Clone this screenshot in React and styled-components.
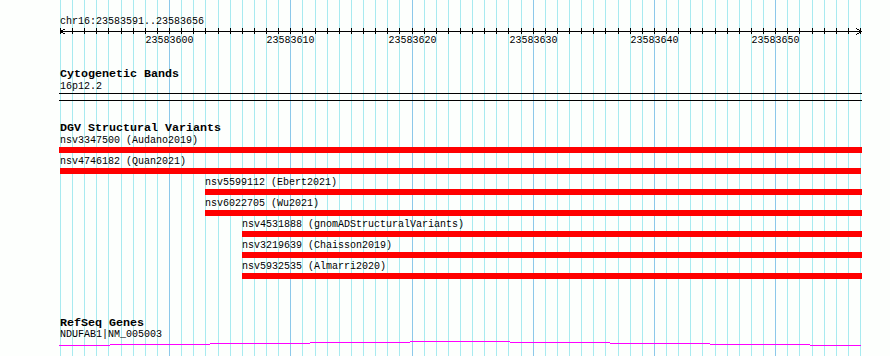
import React from 'react';
import styled, { createGlobalStyle } from 'styled-components';

const START = 23583591;
const END = 23583656;
const LEFT = 60;
const SCALE = 800 / (END - START + 1);

const xOf = (pos) => LEFT + (pos - START) * SCALE;

const GlobalStyle = createGlobalStyle`
  html, body {
    margin: 0;
    padding: 0;
    background: #fdfffd;
  }
  body {
    font-family: 'Liberation Mono', 'DejaVu Sans Mono', monospace;
    color: #000;
  }
`;

const variants = [
  { id: 'nsv3347500', source: 'Audano2019', x0: 59, x1: 862 },
  { id: 'nsv4746182', source: 'Quan2021', x0: 60, x1: 861 },
  { id: 'nsv5599112', source: 'Ebert2021', x0: 205, x1: 862 },
  { id: 'nsv6022705', source: 'Wu2021', x0: 205, x1: 862 },
  { id: 'nsv4531888', source: 'gnomADStructuralVariants', x0: 242, x1: 862 },
  { id: 'nsv3219639', source: 'Chaisson2019', x0: 242, x1: 862 },
  { id: 'nsv5932535', source: 'Almarri2020', x0: 242, x1: 862 },
];

// steps of the intron line, pixel coords
const geneSteps = [
  [59, 110, 345],
  [110, 210, 344],
  [210, 310, 343],
  [310, 410, 342],
  [410, 510, 341],
  [510, 610, 342],
  [610, 710, 343],
  [710, 810, 344],
  [810, 861, 345],
];

const gridLines = Array.from({ length: END - START + 2 }, (_, i) => ({
  x: Math.round(xOf(START + i)),
  major: (START + i) % 10 === 0,
}));

const majorTicks = gridLines.filter((g, i) => (START + i) % 10 === 0).map((g, i) => ({
  x: g.x,
  label: String(Math.ceil(START / 10) * 10 + i * 10),
}));

const Page = styled.div`
  position: relative;
  width: 890px;
  height: 356px;
  overflow: hidden;
  background: #fdfffd;
`;

const GridSvg = styled.svg`
  position: absolute;
  top: 0;
  left: 0;
  z-index: 0;
`;

const Tracks = styled.div`
  position: relative;
  z-index: 1;
  display: flex;
  flex-direction: column;
  padding: 16px 0 0 60px;
`;

const Track = styled.section`
  display: flex;
  flex-direction: column;
  margin-top: ${({ $gap }) => $gap || 0}px;
`;

const TrackTitle = styled.div`
  font-size: 11.67px;
  font-weight: bold;
  line-height: 14px;
  height: 14px;
  white-space: pre;
`;

const FeatureLabel = styled.div`
  font-size: 10px;
  line-height: 12px;
  height: 12px;
  white-space: pre;
  margin-top: ${({ $shift }) => $shift || 0}px;
`;

const RulerSvg = styled.svg`
  display: block;
  margin-left: -60px;
`;

const TickLabels = styled.div`
  position: relative;
  height: 12px;
`;

const TickLabel = styled.span`
  position: absolute;
  top: 0;
  transform: translateX(-50%);
  font-size: 10px;
  line-height: 12px;
  white-space: pre;
`;

const BandBox = styled.div`
  width: 803px;
  height: 6px;
  margin-left: -1px;
  border-top: 1px solid #000;
  border-bottom: 1px solid #000;
`;

const FeatureRow = styled.div`
  display: flex;
  flex-direction: column;
  align-items: flex-start;
  height: 21px;
`;

const Bar = styled.div`
  height: 6px;
  background: #ff0000;
`;

const GeneSvg = styled.svg`
  display: block;
  margin-left: -60px;
`;

const Grid = () => (
  <GridSvg width="890" height="356" shapeRendering="crispEdges">
    {gridLines.map((g) => (
      <line
        key={g.x}
        x1={g.x + 0.5}
        x2={g.x + 0.5}
        y1="0"
        y2="356"
        stroke={g.major ? '#8cc8ea' : '#a8eaf0'}
        strokeWidth="1"
      />
    ))}
  </GridSvg>
);

const Ruler = () => (
  <RulerSvg width="890" height="7" shapeRendering="crispEdges">
    <line x1="60" x2="861" y1="3.5" y2="3.5" stroke="#000" />
    {gridLines.map((g) => (
      <line key={g.x} x1={g.x + 0.5} x2={g.x + 0.5} y1="0" y2="6" stroke="#000" />
    ))}
    <polyline points="65.5,0.5 60.5,3.5 65.5,6.5" fill="none" stroke="#000" />
    <polyline points="856.5,0.5 861.5,3.5 856.5,6.5" fill="none" stroke="#000" />
  </RulerSvg>
);

const GeneLine = () => (
  <GeneSvg width="890" height="6" shapeRendering="crispEdges">
    {geneSteps.map(([a, b, y]) => (
      <line key={a} x1={a} x2={b} y1={y - 340.5} y2={y - 340.5} stroke="#ff00ff" />
    ))}
  </GeneSvg>
);

const App = () => {
  return (
    <>
      <GlobalStyle />
      <Page>
        <Grid />
        <Tracks>
          <Track>
            <FeatureLabel>chr16:{START}..{END}</FeatureLabel>
            <Ruler />
            <TickLabels>
              {majorTicks.map((t) => (
                <TickLabel key={t.label} style={{ left: t.x + 0.5 - LEFT }}>
                  {t.label}
                </TickLabel>
              ))}
            </TickLabels>
          </Track>

          <Track $gap={20}>
            <TrackTitle>Cytogenetic Bands</TrackTitle>
            <FeatureLabel>16p12.2</FeatureLabel>
            <BandBox />
          </Track>

          <Track $gap={20}>
            <TrackTitle>DGV Structural Variants</TrackTitle>
            {variants.map((v) => {
              const labelX = Math.max(v.x0, LEFT);
              return (
                <FeatureRow key={v.id} style={{ paddingLeft: labelX - LEFT }}>
                  <FeatureLabel>
                    {v.id} ({v.source})
                  </FeatureLabel>
                  <Bar style={{ marginLeft: v.x0 - labelX, width: v.x1 - v.x0 }} />
                </FeatureRow>
              );
            })}
          </Track>

          <Track $gap={34}>
            <TrackTitle>RefSeq Genes</TrackTitle>
            <FeatureLabel $shift={-1}>NDUFAB1|NM_005003</FeatureLabel>
            <GeneLine />
          </Track>
        </Tracks>
      </Page>
    </>
  );
};

export default App;
